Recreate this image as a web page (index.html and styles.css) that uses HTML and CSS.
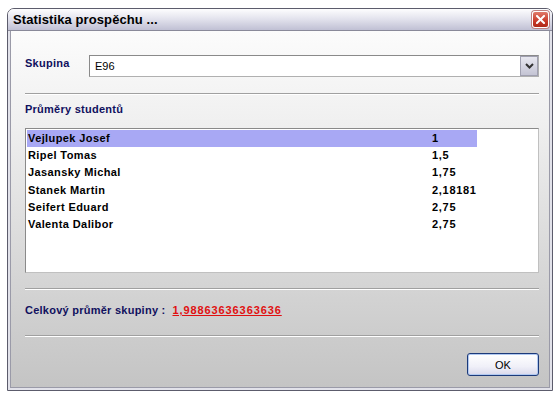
FILE: index.html
```html
<!DOCTYPE html>
<html lang="cs">
<head>
    <meta charset="UTF-8">
    <title>Statistika prospěchu</title>
    <link rel="stylesheet" href="styles.css">
</head>
<body>

    <!-- Dialog window -->
    <div class="window">
        <div class="titlebar">
            <span class="title">Statistika prospěchu ...</span>
            <span class="close-btn">
                <svg width="9" height="9" viewBox="0 0 9 9">
                    <path d="M1 1 L8 8 M8 1 L1 8" stroke="#fff" stroke-width="2" stroke-linecap="square"/>
                </svg>
            </span>
        </div>
        <div class="frame">
            <div class="client">

                <div class="group-row">
                    <label class="label" for="group">Skupina</label>
                    <div class="combo" id="group">
                        <span class="combo-text">E96</span>
                        <span class="combo-btn">
                            <svg width="9" height="6" viewBox="0 0 9 6">
                                <path d="M1 1 L4.5 4.5 L8 1" fill="none" stroke="#333" stroke-width="2"/>
                            </svg>
                        </span>
                    </div>
                </div>

                <hr class="sep sep-1">

                <div class="label list-label">Průměry studentů</div>
                <ul class="list">
                    <li class="row selected"><span class="name">Vejlupek Josef</span><span class="avg">1</span></li>
                    <li class="row"><span class="name">Ripel Tomas</span><span class="avg">1,5</span></li>
                    <li class="row"><span class="name">Jasansky Michal</span><span class="avg">1,75</span></li>
                    <li class="row"><span class="name">Stanek Martin</span><span class="avg">2,18181</span></li>
                    <li class="row"><span class="name">Seifert Eduard</span><span class="avg">2,75</span></li>
                    <li class="row"><span class="name">Valenta Dalibor</span><span class="avg">2,75</span></li>
                </ul>

                <hr class="sep sep-2">

                <div class="total">
                    <span class="label">Celkový průměr skupiny :</span>
                    <span class="total-value">1,98863636363636</span>
                </div>

                <hr class="sep sep-3">

                <div class="buttons">
                    <button class="btn-ok">OK</button>
                </div>
            </div>
        </div>
    </div>

</body>
</html>
```

FILE: styles.css
```css
/* Global */
body {
    margin: 0;
    background-color: #fff;
    font-family: "Liberation Sans", Arial, sans-serif;
    font-size: 11px;
}

/* Window frame */
.window {
    width: 544px;
    height: 381px;
    margin: 8px 0 0 7px;
    border: 1px solid #5c5c6c;
    border-radius: 7px 7px 0 0;
    overflow: hidden;
    display: flex;
    flex-direction: column;
}

.titlebar {
    height: 21px;
    flex: none;
    display: flex;
    align-items: center;
    justify-content: space-between;
    padding: 0 3px 0 5px;
    background: linear-gradient(#fdfdfe, #e4e4ee 45%, #c0c0d4);
    border-bottom: 1px solid #8a8a9a;
}

.title {
    font-weight: bold;
    font-size: 13px;
    letter-spacing: 0.1px;
    color: #000;
}

.close-btn {
    width: 15px;
    height: 15px;
    border: 1px solid #fff;
    border-radius: 3px;
    background: linear-gradient(#e07a6a, #c83a2a 60%, #b02818);
    display: flex;
    align-items: center;
    justify-content: center;
    box-shadow: 0 0 0 1px #c08080;
}

.frame {
    flex: 1;
    padding: 0 2px 2px;
    background-color: #e2e2ea;
    display: flex;
}

.client {
    flex: 1;
    border: 1px solid #9a9aa8;
    border-top: none;
    padding: 24px 10px 0 14px;
    background: linear-gradient(#fcfcfc, #f0f0f0 25%, #d8d8d8 65%, #c4c4c4);
}

.label {
    font-weight: bold;
    letter-spacing: 0.25px;
    color: #10105e;
}

/* Group combo */
.group-row {
    display: flex;
    align-items: flex-start;
}

.group-row .label {
    width: 64px;
    padding-top: 2px;
}

.combo {
    flex: 1;
    height: 20px;
    border: 1px solid #8a8a8a;
    border-color: #8a8a8a #b0b0b0 #b0b0b0 #8a8a8a;
    background-color: #fff;
    display: flex;
    align-items: center;
    justify-content: space-between;
}

.combo-text {
    padding-left: 5px;
    color: #000;
}

.combo-btn {
    width: 16px;
    height: 18px;
    border: 1px solid #a0a0b0;
    background: linear-gradient(#e8e8f0, #c4c4d4);
    display: flex;
    align-items: center;
    justify-content: center;
}

/* Separators */
.sep {
    height: 0;
    border: none;
    border-top: 1px solid #a0a0a0;
    border-bottom: 1px solid #fff;
    margin: 0;
}

.sep-1 {
    margin-top: 16px;
}

.list-label {
    margin-top: 8px;
    height: 16px;
}

/* Student list */
.list {
    list-style: none;
    margin: 9px 0 0;
    padding: 1px 0 0 1px;
    height: 142px;
    border: 1px solid #8a8a8a;
    border-color: #8a8a8a #c0c0c0 #c0c0c0 #8a8a8a;
    background-color: #fff;
}

.row {
    display: flex;
    width: 450px;
    height: 17.2px;
    line-height: 17px;
    font-weight: bold;
    letter-spacing: 0.4px;
    color: #000;
}

.row.selected {
    background-color: #a8a8f4;
}

.name {
    width: 404px;
    padding-left: 1px;
}

.avg {
    letter-spacing: 0.7px;
}

/* Total */
.sep-2 {
    margin-top: 15px;
}

.total {
    margin-top: 14px;
    height: 16px;
    display: flex;
    gap: 7px;
}

.total-value {
    font-weight: bold;
    letter-spacing: 0.9px;
    color: #e01010;
    text-decoration: underline;
}

.sep-3 {
    margin-top: 15px;
}

/* Buttons */
.buttons {
    display: flex;
    justify-content: flex-end;
    margin-top: 16px;
}

.btn-ok {
    width: 72px;
    height: 23px;
    border: 1px solid #1c3a7a;
    border-radius: 3px;
    background: linear-gradient(#ffffff, #f0f0f8 60%, #d8d8ec);
    box-shadow: inset 0 0 0 1px #b0c8f0;
    font-family: "Liberation Sans", Arial, sans-serif;
    font-size: 11px;
    color: #000;
    padding: 0;
}
```
